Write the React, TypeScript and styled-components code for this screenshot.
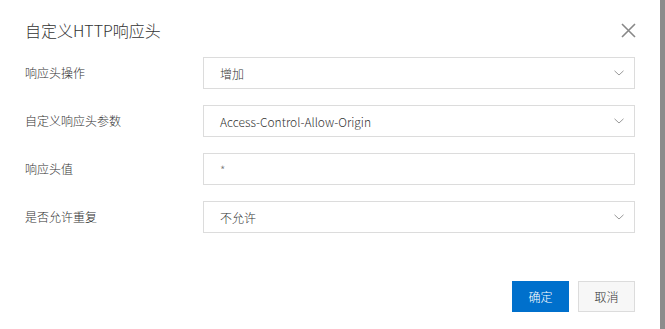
import React from "react";
import styled, { createGlobalStyle } from "styled-components";

const Global = createGlobalStyle`
  html, body { margin: 0; padding: 0; background: #fff; }
  body { font-family: "Noto Sans CJK SC", "Noto Sans", sans-serif; color: #333; font-weight: 300; }
`;

const Page = styled.div`
  display: flex;
  width: 665px;
  height: 329px;
  overflow: hidden;
`;

const Dialog = styled.div`
  flex: 1;
  display: flex;
  flex-direction: column;
  padding: 20px 25px 0 25px;
  background: #fff;
`;

const Strip = styled.div`
  width: 5px;
  background: #8c8c8c;
`;

const Header = styled.div`
  display: flex;
  align-items: center;
  justify-content: space-between;
  height: 20px;
`;

const Title = styled.div`
  font-size: 16px;
  line-height: 20px;
  color: #333;
`;

const Close = styled.button`
  border: 0;
  background: none;
  padding: 0;
  width: 16px;
  height: 16px;
  margin-right: -1px;
  display: flex;
  align-items: center;
  justify-content: center;
  cursor: pointer;
`;

const Form = styled.div`
  display: flex;
  flex-direction: column;
  gap: 16px;
  margin-top: 17px;
`;

const Row = styled.div`
  display: grid;
  grid-template-columns: 178px 1fr;
  align-items: center;
`;

const Label = styled.div`
  font-size: 12px;
  color: #333;
  line-height: 16px;
`;

const Box = styled.div`
  height: 32px;
  box-sizing: border-box;
  border: 1px solid #dcdcdc;
  display: flex;
  align-items: center;
  justify-content: space-between;
  padding: 0 10px 0 16px;
  font-size: 12px;
  color: #333;
  background: #fff;
`;

const Value = styled.span<{ $muted?: boolean }>`
  color: ${(p) => (p.$muted ? "#777" : "#333")};
`;

const Footer = styled.div`
  display: flex;
  justify-content: flex-end;
  gap: 9px;
  margin-top: 48px;
`;

const Button = styled.button<{ $primary?: boolean }>`
  width: 57px;
  height: 31px;
  box-sizing: border-box;
  font-family: inherit;
  font-weight: 300;
  font-size: 12px;
  border: 1px solid ${(p) => (p.$primary ? "#0070cc" : "#dcdcdc")};
  background: ${(p) => (p.$primary ? "#0070cc" : "#f7f7f7")};
  color: ${(p) => (p.$primary ? "#fff" : "#333")};
  padding: 0;
  cursor: pointer;
`;

const Chevron = () => (
  <svg width="10" height="6" viewBox="0 0 10 6" fill="none">
    <path d="M0.5 0.8 L5 5 L9.5 0.8" stroke="#999" strokeWidth="1" />
  </svg>
);

const XIcon = () => (
  <svg width="15" height="15" viewBox="0 0 15 15" fill="none">
    <path d="M1 1 L14 14 M14 1 L1 14" stroke="#888" strokeWidth="1.6" />
  </svg>
);

const rows: { label: string; value: string; select: boolean }[] = [
  { label: "响应头操作", value: "增加", select: true },
  { label: "自定义响应头参数", value: "Access-Control-Allow-Origin", select: true },
  { label: "响应头值", value: "*", select: false },
  { label: "是否允许重复", value: "不允许", select: true },
];

export default function App() {
  return (
    <>
      <Global />
      <Page>
        <Dialog>
          <Header>
            <Title>自定义HTTP响应头</Title>
            <Close aria-label="close">
              <XIcon />
            </Close>
          </Header>
          <Form>
            {rows.map((r) => (
              <Row key={r.label}>
                <Label>{r.label}</Label>
                <Box>
                  <Value $muted={!r.select}>{r.value}</Value>
                  {r.select && <Chevron />}
                </Box>
              </Row>
            ))}
          </Form>
          <Footer>
            <Button $primary>确定</Button>
            <Button>取消</Button>
          </Footer>
        </Dialog>
        <Strip />
      </Page>
    </>
  );
}
